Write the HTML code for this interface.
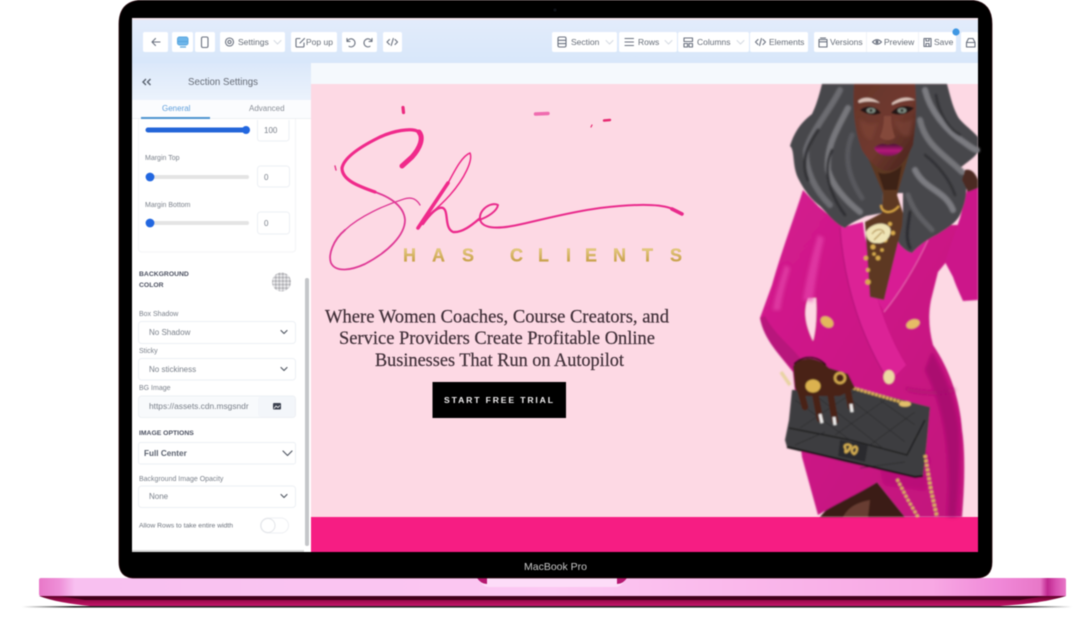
<!DOCTYPE html>
<html lang="en"><head><meta charset="utf-8"><title>MacBook Pro</title>
<style>
html,body{margin:0;padding:0;background:#fff;width:1077px;height:619px;overflow:hidden}
svg{display:block;filter:blur(.5px)}
text{font-family:"Liberation Sans",sans-serif}
.t{font-size:8.5px;fill:#666d78}
.l{font-size:7px;fill:#7b818b}
.v{font-size:8px;fill:#7a808a}
.b{font-size:6.8px;font-weight:bold;fill:#4b5060}
.box{fill:#fff;stroke:#edf0f4;stroke-width:1}
.ic{fill:none;stroke:#6b7280;stroke-width:1.1;stroke-linecap:round;stroke-linejoin:round}
.chev{fill:none;stroke:#555b66;stroke-width:1.2;stroke-linecap:round;stroke-linejoin:round}
.chl{fill:none;stroke:#d5dae2;stroke-width:1;stroke-linecap:round}
.tb{fill:#fff}
.h{font-family:"Liberation Serif",serif;font-size:19px;fill:#3f2e37;stroke:#3f2e37;stroke-width:.2}
</style></head><body>
<svg xmlns="http://www.w3.org/2000/svg" width="1077" height="619" viewBox="0 0 1077 619">
<defs>
<filter id="soft" x="-5%" y="-5%" width="110%" height="110%"><feGaussianBlur stdDeviation=".7"/></filter>
<filter id="soft2" x="-10%" y="-10%" width="120%" height="120%"><feGaussianBlur stdDeviation="1.6"/></filter>
<linearGradient id="hdr" x1="0" y1="0" x2="0" y2="1"><stop offset="0" stop-color="#e3ecfb"/><stop offset="1" stop-color="#d8e7fa"/></linearGradient>
<linearGradient id="side" x1="0" y1="0" x2="0" y2="1"><stop offset="0" stop-color="#dbe8fa"/><stop offset="1" stop-color="#ecf3fc"/></linearGradient>
<linearGradient id="gold" x1="0" y1="0" x2="0" y2="1"><stop offset="0" stop-color="#ecd68c"/><stop offset="1" stop-color="#bd9038"/></linearGradient>
<linearGradient id="base" x1="0" y1="0" x2="1" y2="0">
<stop offset="0" stop-color="#e878c8"/><stop offset=".02" stop-color="#ee90d8"/><stop offset=".035" stop-color="#f8c0f0"/><stop offset=".5" stop-color="#fcc8f2"/><stop offset=".87" stop-color="#f8a8e4"/><stop offset=".935" stop-color="#f088d8"/><stop offset=".975" stop-color="#e878c8"/><stop offset=".982" stop-color="#c02890"/><stop offset=".99" stop-color="#d850b0"/><stop offset="1" stop-color="#e878c8"/></linearGradient>
<linearGradient id="under" x1="0" y1="0" x2="0" y2="1"><stop offset="0" stop-color="#5b0026"/><stop offset=".45" stop-color="#9b0b4c"/><stop offset="1" stop-color="#c4156a"/></linearGradient>
<linearGradient id="shad" x1="0" y1="0" x2="1" y2="0"><stop offset="0" stop-color="#333" stop-opacity="0"/><stop offset=".05" stop-color="#222"/><stop offset=".95" stop-color="#222"/><stop offset="1" stop-color="#333" stop-opacity="0"/></linearGradient>
<linearGradient id="face" x1="0" y1="0" x2="1" y2="1"><stop offset="0" stop-color="#66352b"/><stop offset=".55" stop-color="#70392e"/><stop offset="1" stop-color="#41201a"/></linearGradient>
<linearGradient id="jack" x1="0" y1="0" x2="1" y2="1"><stop offset="0" stop-color="#d41b8f"/><stop offset="1" stop-color="#c2127b"/></linearGradient>
<linearGradient id="lips" x1="0" y1="0" x2="0" y2="1"><stop offset="0" stop-color="#4a0e33"/><stop offset=".55" stop-color="#b51a7a"/><stop offset="1" stop-color="#7f1158"/></linearGradient>
<pattern id="chk" width="5" height="5" patternUnits="userSpaceOnUse" patternTransform="rotate(45)"><rect width="5" height="5" fill="#e8e8ea"/><rect width="2.5" height="2.5" fill="#b5b5b9"/><rect x="2.5" y="2.5" width="2.5" height="2.5" fill="#b5b5b9"/></pattern>
</defs>

<!-- laptop base -->
<rect x="22" y="606" width="1050" height="1.600" fill="url(#shad)"/>
<path d="M39 596 L1066 596 C1050 601 1030 604 1000 606 L90 606 C70 604 52 601 39 596Z" fill="url(#under)"/>
<path d="M60 596 H1045 L1020 600 H85Z" fill="#42001b"/>
<path d="M41 578 H1064 Q1066 578 1066 580 V596 H41 Q39 596 39 594 V580 Q39 578 41 578Z" fill="url(#base)"/>
<path d="M477 578 H627 L622 584 Q619 587 615 587 H489 Q485 587 482 584Z" fill="#fddcf8"/>
<path d="M477 578 H487 L487 584 Q481 584 477 578Z" fill="#b5166f"/>
<path d="M617 578 H627 Q623 584 617 584Z" fill="#b5166f"/>

<!-- laptop lid -->
<path d="M144 0 H968 Q992 0 992 24 V562 Q992 578 976 578 H135 Q119 578 119 562 V24 Q119 0 144 0Z" fill="#000" stroke="#2a0a10" stroke-width=".8"/>
<circle cx="555" cy="10" r="1.5" fill="#10131a"/>
<text x="555.5" y="570" text-anchor="middle" style="font-size:10.5px;fill:#c9c9c9">MacBook Pro</text>

<!-- screen -->
<rect x="132" y="18" width="846" height="534" fill="#fff"/>
<rect x="132" y="18" width="846" height="45" fill="url(#hdr)"/>
<rect x="132" y="18" width="846" height="2" fill="#f2e4ec"/>
<rect x="132" y="63" width="179" height="37" fill="url(#side)"/>
<rect x="311" y="63" width="667" height="21" fill="#f5f9fd"/>
<rect x="311" y="84" width="667" height="433" fill="#fdd9e4"/>
<rect x="311" y="517" width="667" height="35" fill="#f61d83"/>

<!-- toolbar left -->
<g class="tb">
<rect x="143" y="32" width="25" height="20" rx="2"/>
<rect x="172" y="32" width="21" height="20" rx="2"/>
<rect x="195" y="32" width="20" height="20" rx="2"/>
<rect x="220" y="32" width="65" height="20" rx="2"/>
<rect x="291" y="32" width="46" height="20" rx="2"/>
<rect x="342" y="32" width="35" height="20" rx="2"/>
<rect x="383" y="32" width="19" height="20" rx="2"/>
<rect x="552" y="32" width="65" height="20" rx="2"/>
<rect x="619" y="32" width="58" height="20" rx="2"/>
<rect x="678" y="32" width="71" height="20" rx="2"/>
<rect x="750" y="32" width="58" height="20" rx="2"/>
<rect x="814" y="32" width="142" height="20" rx="2"/>
<rect x="961" y="32" width="17" height="20" rx="2"/>
</g>
<rect x="866" y="32" width="1" height="20" fill="#f0f3f8"/><rect x="918" y="32" width="1" height="20" fill="#f0f3f8"/>
<path class="ic" d="M160 42 H152 M155.5 38.500 L152 42 L155.500 45.500" stroke-width="1.3"/>
<rect x="177.500" y="37" width="10.500" height="8" rx="2" fill="#6fb6ea" stroke="#5aa7e0"/>
<path d="M178 41.500 H188 M180 47 H186" stroke="#5aa7e0" stroke-width="1.2" fill="none"/>
<rect x="201.500" y="37" width="6.500" height="10.500" rx="1.500" class="ic"/>
<circle cx="229.500" cy="42" r="4" class="ic"/><circle cx="229.500" cy="42" r="1.600" class="ic"/>
<text x="238" y="45" class="t">Settings</text><path class="chl" d="M274 40.500 L277.500 44 L281 40.500"/>
<path class="ic" d="M300 38.500 H297 Q296 38.500 296 39.500 V46 Q296 47 297 47 H303 Q304 47 304 46 V43 M300 43 L304.500 38.500"/>
<text x="306" y="45" class="t">Pop up</text>
<path class="ic" d="M347 38.500 V41.500 H350 M347.500 41 A4 4 0 1 1 349 46.300" stroke-width="1.2"/>
<path class="ic" d="M372 38.500 V41.500 H369 M371.500 41 A4 4 0 1 0 370 46.300" stroke-width="1.2"/>
<path class="ic" d="M389.500 39.500 L387 42 L389.500 44.500 M395 39.500 L397.500 42 L395 44.500 M393.300 38.500 L391.200 45.500"/>

<!-- toolbar right -->
<rect x="558" y="37" width="8" height="10" rx="1.500" class="ic"/><path class="ic" d="M558 40.300 H566 M558 43.600 H566"/>
<text x="571" y="45" class="t">Section</text><path class="chl" d="M606 40.500 L609.500 44 L613 40.500"/>
<path class="ic" d="M625 38.500 H633.500 M625 42 H633.500 M625 45.500 H633.500"/>
<text x="638" y="45" class="t">Rows</text><path class="chl" d="M665 40.500 L668.500 44 L672 40.500"/>
<path class="ic" d="M684 38 H692.500 V41.500 H684Z M684 43.500 H687.500 V47 H684Z M689 43.500 H692.500 V47 H689Z"/>
<text x="697" y="45" class="t">Columns</text><path class="chl" d="M737 40.500 L740.500 44 L744 40.500"/>
<path class="ic" d="M758 39.500 L755.500 42 L758 44.500 M763 39.500 L765.500 42 L763 44.500 M761.400 38.500 L759.600 45.500"/>
<text x="769" y="45" class="t">Elements</text>
<path class="ic" d="M819 39.500 H827 V47 H819Z M819 41.800 H827 M820.500 38 H825.500"/>
<text x="830" y="45" class="t">Versions</text>
<path class="ic" d="M872.500 42 Q877 37.500 881.500 42 Q877 46.500 872.500 42Z"/><circle cx="877" cy="42" r="1.500" fill="#6b7280"/>
<text x="884" y="45" class="t">Preview</text>
<path class="ic" d="M924 38.500 H931 V46.500 H924Z M926 38.500 V41 H929 V38.500 M926 46.500 V43.500 H929 V46.500"/>
<text x="934" y="45" class="t">Save</text>
<path class="ic" d="M966.500 47 V42.500 L968.500 38.500 H973 L975 42.500 V47Z M966.500 42.500 H975"/>
<circle cx="956" cy="32" r="3.600" fill="#3f97e3"/>

<!-- sidebar header -->
<path d="M146 79 L143 82 L146 85 M150.500 79 L147.500 82 L150.500 85" fill="none" stroke="#59626f" stroke-width="1.4"/>
<text x="188" y="85" style="font-size:9.700px;fill:#666c76">Section Settings</text>

<!-- panel card -->
<rect x="138.500" y="112" width="157" height="140" rx="3" fill="#fff" stroke="#f3f4f6"/>
<rect x="132" y="100" width="179" height="18" fill="#fbfcfe"/>
<rect x="132" y="118" width="179" height="1" fill="#eef0f3"/>
<text x="162" y="111" style="font-size:8px;fill:#5f9fdc">General</text>
<text x="249" y="111" style="font-size:8px;fill:#8a8f98">Advanced</text>
<rect x="141" y="117" width="69" height="2" fill="#4d93cf"/>

<rect x="145.500" y="127.500" width="100" height="5" rx="2.500" fill="#2465d8"/>
<circle cx="246" cy="130" r="4" fill="#2267e0"/>
<path class="box" d="M257.500 120 V138 Q257.500 141 260 141 H286 Q289 141 289 138 V120"/>
<text x="264" y="133" class="v">100</text>

<text x="145" y="160" class="l">Margin Top</text>
<rect x="146" y="175" width="103" height="4" rx="2" fill="#e4e4e4"/>
<circle cx="150" cy="177" r="4.400" fill="#2267e0"/>
<rect x="257.500" y="166" width="32" height="21" rx="3" class="box"/>
<text x="264" y="180" class="v">0</text>

<text x="145" y="207" class="l">Margin Bottom</text>
<rect x="146" y="221" width="103" height="4" rx="2" fill="#e4e4e4"/>
<circle cx="150" cy="223" r="4.400" fill="#2267e0"/>
<rect x="257.500" y="212" width="32" height="22" rx="3" class="box"/>
<text x="264" y="226" class="v">0</text>

<text x="139" y="276" class="b">BACKGROUND</text>
<text x="139" y="287" class="b">COLOR</text>
<circle cx="281.500" cy="282" r="9.500" fill="url(#chk)"/>

<text x="139" y="316" class="l">Box Shadow</text>
<rect x="138.500" y="321.500" width="157" height="22" rx="3" class="box"/>
<text x="149" y="335" class="v">No Shadow</text><path class="chev" d="M281 330.500 L284 333.500 L287 330.500"/>

<text x="139" y="353" class="l">Sticky</text>
<rect x="138.500" y="358.500" width="157" height="21.500" rx="3" class="box"/>
<text x="149" y="372" class="v">No stickiness</text><path class="chev" d="M281 367.500 L284 370.500 L287 367.500"/>

<text x="139" y="390" class="l">BG Image</text>
<rect x="138.500" y="396" width="157" height="21.500" rx="3" fill="#f8fafc" stroke="#edf0f4"/>
<rect x="258" y="396.500" width="37" height="20.500" rx="3" fill="#f3f6fa"/>
<text x="149" y="409" class="v" style="font-size:8.400px">https://assets.cdn.msgsndr</text>
<rect x="273" y="403" width="8" height="6.500" rx="1" fill="#3c4250"/>
<path d="M274 408.500 L276 406 L278 407.500 L280 405.500" stroke="#fff" stroke-width=".8" fill="none"/>

<text x="139" y="435" class="b">IMAGE OPTIONS</text>
<rect x="138.500" y="442.500" width="157" height="21.500" rx="2" class="box"/>
<text x="144" y="456" style="font-size:8.200px;font-weight:bold;fill:#5c6370">Full Center</text>
<path class="chev" d="M283 451 L287.500 455.500 L292 451" stroke-width="1.4"/>

<text x="139" y="481" class="l">Background Image Opacity</text>
<rect x="138.500" y="486" width="157" height="21.500" rx="3" class="box"/>
<text x="149" y="499" class="v">None</text><path class="chev" d="M281 494.500 L284 497.500 L287 494.500"/>

<text x="139" y="527.500" class="l" style="font-size:6.800px;fill:#6b717b">Allow Rows to take entire width</text>
<rect x="260.500" y="518" width="28" height="15" rx="7.500" fill="#fff" stroke="#eef0f3"/>
<circle cx="268" cy="525.500" r="7" fill="#fff" stroke="#e3e5e9"/>
<rect x="305" y="278" width="4" height="268" rx="2" fill="#c4c6c9"/>
<rect x="132" y="550" width="172" height="2" fill="#d8d8d8"/>

<!-- logo -->
<g fill="none" stroke-linecap="round" stroke-linejoin="round">
<path d="M345 230 C333 240 328 255 331 263 C336 273 352 270 365 264 C388 252 405 235 405 220 C404 205 388 196 372 191" stroke="#df3a96" stroke-width="1.800"/>
<path d="M345 230 C360 216 385 205 404 199 C410 197 416 198 420 205" stroke="#df3a96" stroke-width="1.300"/>
<path d="M375 192 C358 186 342 180 342 168 C344 158 358 148 378 138 C392 131 412 127 419 132" stroke="#f02a8b" stroke-width="3.200"/>
<path d="M419 132 C424 138 420 148 412 157 L402 166" stroke="#f02a8b" stroke-width="5"/>
<path d="M447 185 C455 170 462 156 470 153 C473 160 465 178 450 195 C442 204 436 209 430 214" stroke="#ee2a8a" stroke-width="1.500"/>
<path d="M418 228 L448 183" stroke="#f02a8b" stroke-width="3.600"/>
<path d="M423 224 C430 214 438 206 443 208 C449 211 444 228 453 232 C462 233 472 225 479 219" stroke="#ec2a8c" stroke-width="2.300"/>
<path d="M479 220 C488 217 497 211 498 205 C490 201 476 212 481 222 C486 230 505 228 522 224 C545 219 570 212 600 208 C625 205 655 203 670 208 C676 210 680 212 682 214" stroke="#e92b8c" stroke-width="2"/>
<path d="M672 209 L682 214" stroke="#e92b8c" stroke-width="3.600"/>
<path d="M335 166 L336 170" stroke="#e63d8e" stroke-width="1.500"/>
<path d="M403 107.500 L403.500 112.500" stroke="#ec2a7f" stroke-width="3.200"/>
<path d="M535.500 114 L548 113.500" stroke="#ec58a6" stroke-width="3.400" opacity=".85"/>
<path d="M604 120.500 L610 120" stroke="#e72a72" stroke-width="2.400"/>
<path d="M592 125 L591 127" stroke="#e72a72" stroke-width="1.200"/>
</g>
<text y="261.500" fill="url(#gold)" stroke="#d6b46a" stroke-width=".3" style="font-size:18px;font-weight:bold" x="403 432 462 490 510 538 566 585 613 642 670">HAS CLIENTS</text>

<!-- headline -->
<text x="325" y="322.500" textLength="344" lengthAdjust="spacingAndGlyphs" class="h">Where Women Coaches, Course Creators, and</text>
<text x="339" y="344" textLength="316" lengthAdjust="spacingAndGlyphs" class="h">Service Providers Create Profitable Online</text>
<text x="375" y="366" textLength="249" lengthAdjust="spacingAndGlyphs" class="h">Businesses That Run on Autopilot</text>
<rect x="432.500" y="382" width="133.500" height="36" fill="#000"/>
<text x="444" y="403" textLength="109" style="font-size:8.600px;font-weight:bold;fill:#f2f0f1">START FREE TRIAL</text>

<!-- woman -->
<g filter="url(#soft)">
<!-- legs -->
<path d="M826 510 C848 496 865 490 877 482 L905 517 L820 517Z" fill="#3b1a14"/>
<path d="M843 517 C848 508 855 503 870 500 L868 517Z" fill="#7a4d3f" opacity=".7"/>
<!-- jacket -->
<path d="M803 190 C795 215 782 250 772 285 L760 318 C764 340 780 355 793 372 L800 440 L802 457 L818 515 L830 508 C850 497 865 490 877 482 L905 517 L962 517 C965 480 965 450 962 430 C960 400 950 370 933 345 C929 330 928 315 931 300 L938 272 L952 255 L958 225 L910 225 L882 305 L862 225 L845 229 L818 206Z" fill="url(#jack)"/>
<path d="M960 218 L967 190 L978 186 L978 300 L963 301 C958 290 955 283 953 277 L945 262Z" fill="#cc188a"/>
<path d="M808 298 C804 310 804 322 813 341 C816 330 817 312 816 298Z" fill="#fdd9e4"/>
<!-- shading -->
<path d="M760 318 C764 340 780 355 793 370 L800 358 C790 345 775 335 765 316Z" fill="#a80f72" opacity=".6"/>
<g filter="url(#soft2)">
<path d="M818 235 C812 255 806 280 803 300 L813 302 C815 280 820 255 824 238Z" fill="#ea4ab0" opacity=".6"/>
<path d="M785 265 C780 282 775 295 773 310 L780 310 C782 295 786 282 790 268Z" fill="#ee55b8" opacity=".5"/>
<path d="M932 352 C947 378 956 402 959 430 C960 460 958 490 956 517 L948 517 C950 470 950 420 925 370Z" fill="#980a66" opacity=".6"/>
<path d="M905 387 C925 392 945 392 955 388 L955 392 C935 396 920 395 907 391Z" fill="#a50d6d" opacity=".6"/>
<path d="M870 420 C880 440 880 480 885 485 L925 490 L930 460 L900 400Z" fill="#a80c6e" opacity=".4"/>
</g>
<!-- lapels -->
<path d="M840 228 L863 222 C867 262 878 320 906 365 L889 382 C866 345 845 295 840 228Z" fill="#dc2096"/>
<path d="M905 222 L928 240 C918 262 902 290 884 312 L878 300Z" fill="#d81e94"/>
<path d="M840 228 C845 295 866 345 889 382" fill="none" stroke="#a80f72" stroke-width=".8"/>
<path d="M928 240 C918 262 902 290 884 312" fill="none" stroke="#ee76be" stroke-width=".7"/>
<!-- hair -->
<path d="M822 84 C818 100 815 108 812 114 C802 122 795 130 790 146 C795 150 792 165 798 178 C805 192 812 200 820 206 C828 214 835 224 845 228 C852 222 858 220 866 216 L882 213 L883 193 L903 193 L903 213 C898 230 895 238 900 245 C905 250 908 252 912 253 C920 244 930 238 938 234 C950 226 958 222 962 210 C968 195 968 180 960 168 C970 160 978 155 978 150 L978 137 C970 128 960 122 957 115 C952 105 950 95 947 84Z" fill="#47474b"/>
<g fill="none" stroke-linecap="round" filter="url(#soft)">
<path d="M840 90 C830 110 812 130 806 150 C805 170 815 190 830 205" stroke="#6c6c71" stroke-width="6"/>
<path d="M848 108 C838 128 826 145 828 170 C832 185 845 200 860 212" stroke="#77777c" stroke-width="6"/>
<path d="M852 135 C844 155 847 175 862 198" stroke="#58585d" stroke-width="5"/>
<path d="M818 130 C808 145 800 160 808 180" stroke="#2e2e32" stroke-width="3"/>
<path d="M832 150 C822 170 830 195 845 215" stroke="#2a2a2e" stroke-width="2.500"/>
<path d="M925 90 C930 110 945 130 965 143 C972 148 975 150 977 150" stroke="#7c7c81" stroke-width="6"/>
<path d="M920 120 C925 145 945 155 962 172" stroke="#747479" stroke-width="6"/>
<path d="M915 170 C925 190 945 190 953 210" stroke="#7c7c81" stroke-width="6"/>
<path d="M908 195 C915 215 925 222 932 230" stroke="#5e5e63" stroke-width="5"/>
<path d="M936 95 C939 115 950 130 960 135" stroke="#2e2e32" stroke-width="2.500"/>
<path d="M925 155 C938 165 950 180 955 195" stroke="#2e2e32" stroke-width="2.500"/>
<path d="M910 212 C908 225 905 238 910 248" stroke="#2a2a2e" stroke-width="3"/>
</g>
<!-- neck and chest -->
<path d="M868 158 L911 148 L897 195 L903 213 L902 226 L884 300 L870 297 L865 222 L882 213 L883 193Z" fill="#5d3820"/>
<path d="M878 172 C884 176 896 172 902 165 L897 190 L884 190Z" fill="#3d2015"/>
<!-- necklace -->
<g fill="#d9ab4d"><circle cx="866" cy="258" r="2.300"/><circle cx="868" cy="270" r="2"/><circle cx="868" cy="282" r="2.800"/><circle cx="878" cy="258" r="2.400"/><circle cx="885" cy="240" r="2.500"/><circle cx="873" cy="247" r="2.500"/><circle cx="893" cy="233" r="2.200"/><circle cx="882" cy="250" r="1.800"/><circle cx="890" cy="224" r="2"/><circle cx="874" cy="254" r="1.800"/></g>
<path d="M866 232 C870 224 884 220 890 228 C893 236 884 245 877 243 C870 244 866 238 866 232Z" fill="#efe4b6"/>
<path d="M872 234 C876 228 884 228 884 234 M874 240 L882 232" stroke="#a47b2e" stroke-width="1" fill="none"/>
<path d="M881 205 C881 212 890 216 899 206" stroke="#d9a544" stroke-width="2" fill="none"/>
<!-- hand by head -->
<path d="M965 170 C972 168 976 175 978 180 L978 188 L968 192 L962 180Z" fill="#4c2a22"/>
<!-- face -->
<path d="M854 84 L915 84 C917 105 916 125 913 145 C906 160 899 171 888 171 C878 171 868 160 862 150 C856 135 852 115 854 84Z" fill="url(#face)"/>
<path d="M884 116 C884 128 881 134 880 137 C884 141 892 141 895 137 C893 132 891 125 891 116Z" fill="#84493a"/>
<g filter="url(#soft2)"><path d="M860 118 C866 125 874 125 878 122 L872 140 C864 140 860 130 860 118Z" fill="#7d4535" opacity=".7"/>
<path d="M895 120 C902 124 908 122 913 118 L910 135 C902 140 898 130 895 120Z" fill="#7d4535" opacity=".6"/></g>
<path d="M858 101 C864 96 872 97 880 103 C872 101 866 101 859 103Z" fill="#d9bfb5"/>
<path d="M892 103 C900 97 908 96 915 100 C908 100 900 101 892 105Z" fill="#d9bfb5"/>
<path d="M860 110 C867 104 876 106 881 113 C875 116 867 115 860 110Z" fill="#241815"/>
<path d="M891 113 C896 106 906 104 914 108 C907 115 898 116 891 113Z" fill="#241815"/>
<ellipse cx="871" cy="110.500" rx="4.500" ry="2.800" fill="#7d8a80"/><ellipse cx="902" cy="110.500" rx="4.500" ry="2.800" fill="#7d8a80"/>
<circle cx="871" cy="110.500" r="1.400" fill="#151515"/><circle cx="902" cy="110.500" r="1.400" fill="#151515"/>
<path d="M874 148 C880 142 885 144 888 145 C891 144 896 142 903 148 C898 158 880 159 874 148Z" fill="url(#lips)"/>
<!-- buttons -->
<ellipse cx="827" cy="322" rx="7" ry="5" transform="rotate(35 827 322)" fill="#e3b85c"/>
<ellipse cx="913" cy="324" rx="7" ry="4.500" transform="rotate(-20 913 324)" fill="#e6bd65"/>
<ellipse cx="889" cy="377" rx="5.500" ry="7" fill="#ecd9a2"/>
<!-- bag -->
<path d="M792 390 L853 388 L910 402 L930 407 L927 440 L923 476 L915 477 L845 462 L787 447 L785 440 L789 420Z" fill="#3e3e40"/>
<path d="M789 428 L850 440 L907 455 L925 420" fill="none" stroke="#1d1d1f" stroke-width="1.500"/>
<path d="M795 400 L850 440 M815 395 L885 450 M845 395 L905 442 M880 400 L915 425 M800 428 L860 388 M835 435 L885 400 M870 445 L915 412" stroke="#28282a" stroke-width=".7" fill="none"/>
<path d="M795 445 L825 432 M860 468 L905 462" stroke="#28282a" stroke-width=".7" fill="none"/>
<path d="M787 447 L915 477 L923 476" stroke="#111" stroke-width="2" fill="none"/>
<path d="M840 440 L868 445 L865 462 L838 456Z" fill="#2b2b2d"/>
<path d="M853 388 L908 404" stroke="#d7ad55" stroke-width="3" fill="none" stroke-dasharray="3 .8"/>
<ellipse cx="905" cy="404" rx="6" ry="2.800" fill="#e3c06a"/>
<path d="M846 449 C842 445 848 443 851 446 C848 452 844 455 846 449 M854 447 C858 445 858 452 854 454 C851 452 851 449 854 447" fill="none" stroke="#d8b153" stroke-width="2.200"/>
<path d="M925 455 L931 490 L937 517" stroke="#d9af5c" stroke-width="3.500" fill="none" stroke-dasharray="3 1.500"/>
<path d="M897 479 L908 500 L918 517" stroke="#d9af5c" stroke-width="3" fill="none" stroke-dasharray="3 1.500"/>
<!-- hand -->
<path d="M793 366 C803 355 818 357 829 368 L848 374 L855 388 L840 396 L800 396 L795 388Z" fill="#4a2318"/>
<g stroke-linecap="round" fill="none" stroke="#4a2318" stroke-width="6.500"><path d="M799 385 L805 407"/><path d="M814 388 L820 419"/><path d="M829 385 L835 421"/><path d="M846 382 L851 407"/></g>
<path d="M794 364 C804 354 818 356 826 365" fill="none" stroke="#26100b" stroke-width="1.500"/>
<ellipse cx="813" cy="386" rx="7.500" ry="6.500" fill="#dcb24f"/>
<circle cx="840" cy="378" r="5" fill="none" stroke="#d3a94e" stroke-width="2.500"/>
<path d="M820 414 L822 423 M834 417 L835 425 M851 404 L852 412" stroke="#f0efee" stroke-width="3"/>
<path d="M781 372 L790 385" stroke="#e8d3a2" stroke-width="3.500"/>
</g>
</svg>
</body></html>
